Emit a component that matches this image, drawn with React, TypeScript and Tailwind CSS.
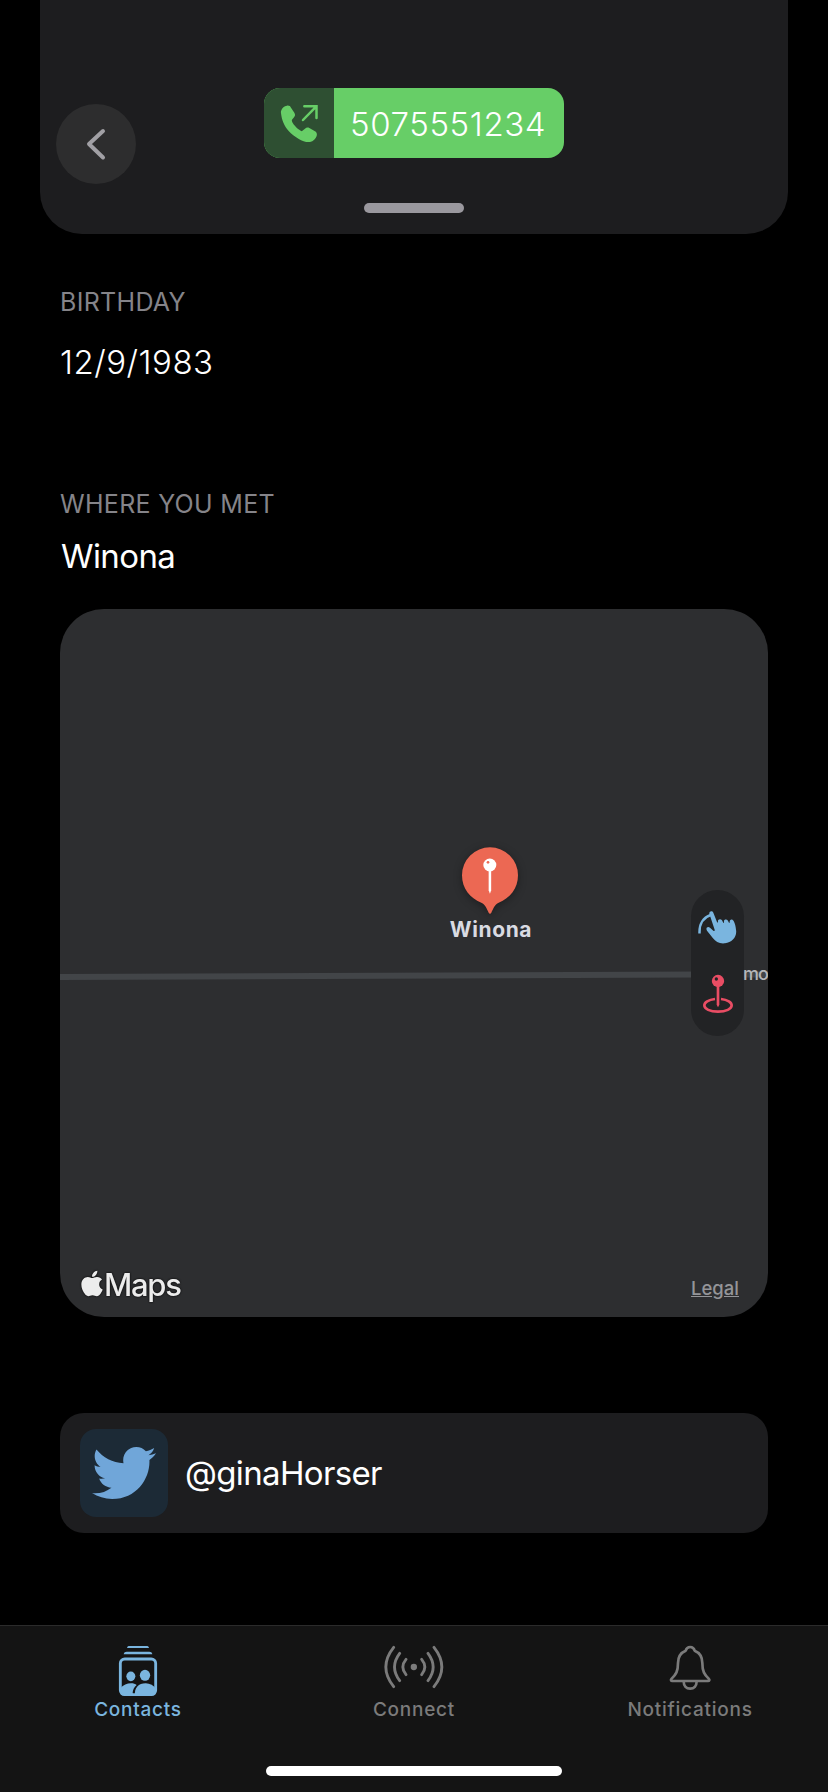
import React from "react";
import { FaApple, FaTwitter } from "react-icons/fa";

function OutgoingCallIcon() {
  return (
    <svg className="h-10 w-10" viewBox="88 102 120 120" fill="none">
      <path
        d="M94 130C92 119 102 108 112 107C118 106 122 109 124 113L134 128C138 134 136 138 132 143L128 148C126 151 126 153 128 157C132 165 143 177 153 182C156 184 158 184 160 181L166 176C170 172 175 172 179 174L196 184C201 187 203 192 201 198C198 207 191 214 181 216C163 219 135 202 117 183C103 168 96 149 94 130Z"
        fill="#67ce67"
      />
      <path d="M160 150L200 109M164 109H200.500V144" stroke="#67ce67" strokeWidth="7.500" strokeLinecap="round" strokeLinejoin="miter" />
    </svg>
  );
}

function PlacePin() {
  return (
    <svg className="h-[72px] w-[64px] drop-shadow-[0_2px_4px_rgba(0,0,0,0.35)]" viewBox="114 76 192 216">
      <path
        d="M210 83A84 84 0 0 1 294 167C294 206 270 236 236 249C224 254 219 268 214 279C212 283 208 283 206 279C201 268 196 254 184 249C150 236 126 206 126 167A84 84 0 0 1 210 83Z"
        fill="#ec6853"
      />
      <circle cx="209.500" cy="136" r="19.500" fill="#fff" />
      <path d="M206 154H213.500V212L209.750 222L206 212Z" fill="#fff" />
      <circle cx="204" cy="128" r="4" fill="#ec6853" />
    </svg>
  );
}

function HandDrawIcon() {
  return (
    <svg className="-ml-0.5 h-[34px] w-[40px]" viewBox="80 119 120 102" fill="none">
      <path d="M87.500 186C87 162 98 141 121 134" stroke="#7ab5df" strokeWidth="7.500" strokeLinecap="square" />
      <path
        d="M117 130C116 122 126 120 129 127L140 155C142 158 144 157 143 154C141 147 151 144 155 150L158 156C160 159 162 158 161 155C159 147 169 145 173 151L175 156C177 159 178 158 178 154C179 145 187 146 190 152C194 160 196 168 197 178C201 199 185 217 164 219C147 221 136 214 128 204L110 181C105 173 112 167 119 172L129 181C132 183 134 181 133 178Z"
        fill="#7ab5df"
      />
    </svg>
  );
}

function DropPinIcon() {
  return (
    <svg className="h-[40px] w-[32px]" viewBox="93 312 96 120" fill="none">
      <path
        d="M132 387C112 389 100 397 100 406C100 417 117 425 141 425C165 425 182 417 182 406C182 397 170 389 150 387"
        stroke="#e94d64"
        strokeWidth="8"
      />
      <path d="M137 348H145V404L141 412L137 404Z" fill="#e94d64" />
      <circle cx="141" cy="333" r="18.500" fill="#e94d64" />
      <circle cx="136" cy="327" r="5" fill="#222325" />
    </svg>
  );
}

function ContactsIcon() {
  return (
    <svg className="h-[52px] w-[40px]" viewBox="114 75 120 156" fill="none">
      <path d="M141 84C142 79 145 78 149 78H199C203 78 206 79 207 84Z" fill="#7ab5df" />
      <path d="M131 103C132 97 135 95 140 95H208C213 95 216 97 217 103Z" fill="#7ab5df" />
      <rect x="121" y="117" width="106" height="107" rx="13" stroke="#7ab5df" strokeWidth="8.500" />
      <ellipse cx="152.500" cy="169" rx="13.500" ry="14.500" fill="#7ab5df" />
      <ellipse cx="195" cy="166" rx="15.500" ry="16.500" fill="#7ab5df" />
      <path d="M121 205C130 195 141 190 153 190C160 190 166 192 170 195C162 202 158 211 158 219L160 226H134C125 226 121 222 121 212Z" fill="#7ab5df" />
      <path d="M165 226C162 204 176 190 197 190C210 190 221 197 228 206V214C228 222 224 226 216 226Z" fill="#7ab5df" />
    </svg>
  );
}

function BroadcastIcon() {
  return (
    <svg className="h-[52px] w-[64px]" viewBox="65 63 192 156" fill="none" stroke="#7b7b7b" strokeWidth="8.500" strokeLinecap="round">
      <circle cx="160.500" cy="141" r="9.500" fill="#7b7b7b" stroke="none" />
      <path d="M137 118Q118 141 137 164M118 100Q87 141 118 182M100 82Q53 141 100 200" />
      <path d="M184 118Q203 141 184 164M203 100Q234 141 203 182M221 82Q268 141 221 200" />
    </svg>
  );
}

function BellIcon() {
  return (
    <svg className="h-[48px] w-[44px]" viewBox="172 102 132 144" fill="none" stroke="#7b7b7b" strokeWidth="8" strokeLinejoin="round">
      <path d="M238.500 111C231 111 227 115 225 122C210 128 202 141 202 159C202 184 196 193 183 206C179 210 181 213 185 213H292C296 213 298 210 294 206C281 193 275 184 275 159C275 141 267 128 252 122C250 115 246 111 238.500 111Z" />
      <path d="M219 214C219 228 227 236 238.500 236C250 236 258 228 258 214" />
    </svg>
  );
}

export default function App() {
  return (
    <div className="flex h-[1792px] w-[828px] flex-col overflow-hidden bg-black font-['Inter','Liberation_Sans',sans-serif] text-white">
      <header className="mx-10 flex h-[234px] shrink-0 rounded-b-[42px] bg-[#1d1d1f] pl-4">
        <button className="mt-[104px] flex h-20 w-20 items-center justify-center rounded-full bg-[#2d2d2e]" aria-label="Back">
          <svg className="h-9 w-6" viewBox="0 0 24 36" fill="none" stroke="#a1a0a5" strokeWidth="4" strokeLinecap="round" strokeLinejoin="round">
            <path d="M19 5L5 18L19 31.500" />
          </svg>
        </button>
        <div className="ml-[128px] flex w-[300px] flex-col items-center pt-[88px]">
          <div className="flex h-[70px] w-full overflow-hidden rounded-2xl bg-[#67ce67]">
            <div className="flex w-[70px] items-center justify-center bg-[#2e4f32] pt-px">
              <OutgoingCallIcon />
            </div>
            <span className="pt-1 pl-4 text-[33px] leading-[64px] font-[360] tracking-[0.6px]">5075551234</span>
          </div>
          <div className="mt-[45px] h-[10px] w-[100px] rounded-full bg-[#9a989e]" />
        </div>
      </header>

      <main className="flex flex-1 flex-col px-[60px]">
        <h2 className="mt-[52px] h-8 text-[25px] leading-8 tracking-[0.3px] text-[#858489]">BIRTHDAY</h2>
        <p className="mt-6 h-10 text-[33px] leading-10 font-[350] tracking-[0.5px]">12/9/1983</p>
        <h2 className="mt-[106px] h-8 text-[25px] leading-8 tracking-[0.3px] text-[#858489]">WHERE YOU MET</h2>
        <p className="mt-4 h-10 pl-px text-[33px] leading-10 tracking-[-0.6px]">Winona</p>

        <section className="relative mt-[33px] h-[708px] w-[708px] shrink-0 overflow-hidden rounded-[44px] bg-[#2d2e30]">
          <svg className="absolute top-0 left-0 h-full w-full" viewBox="0 0 708 708">
            <path d="M0 368L640 365.500L708 365.500" stroke="#424548" strokeWidth="6" fill="none" />
          </svg>
          <div className="absolute top-[236px] left-[380px] flex w-[100px] flex-col items-center">
            <PlacePin />
            <span className="mt-[1px] ml-[2px] text-[21px] leading-6 font-bold tracking-[0.6px] text-[#d9dbe2]">Winona</span>
          </div>
          <div className="absolute top-[281px] left-[631px] flex h-[146px] w-[53px] flex-col items-center rounded-full bg-[#222325] pt-5">
            <HandDrawIcon />
            <div className="mt-[30px]">
              <DropPinIcon />
            </div>
          </div>
          <span className="absolute top-[353px] left-[683px] text-[18px] leading-6 font-medium tracking-[-1px] text-[#b5b6b9]">mo</span>
          <div className="absolute bottom-[12px] left-[21px] flex items-center text-[#ececec] drop-shadow-[0_0_1px_#000]">
            <FaApple className="mb-1 h-[29px] w-[22px]" />
            <span className="ml-px text-[31px] leading-10 font-[450] tracking-[-1.3px]">Maps</span>
          </div>
          <a className="absolute right-[29px] bottom-[17px] text-[18.5px] leading-6 font-medium text-[#949598] underline">Legal</a>
        </section>

        <section className="mt-24 flex h-[120px] shrink-0 items-center rounded-3xl bg-[#1d1d1f] px-5">
          <div className="flex h-[88px] w-[88px] items-center justify-center rounded-2xl bg-[#1c2a36]">
            <FaTwitter className="h-16 w-16 text-[#70a6d9]" />
          </div>
          <span className="ml-[17px] text-[33px] leading-10 tracking-[-0.65px]">@ginaHorser</span>
        </section>
      </main>

      <nav className="flex h-[167px] shrink-0 flex-col border-t border-[#2b2b2b] bg-[#141414]">
        <div className="grid h-[140px] grid-cols-3 text-[19px] leading-6 font-medium tracking-[0.75px] text-[#7b7b7b]">
          <div className="flex flex-col items-center pt-[19px] text-[#7ab5df]">
            <ContactsIcon />
            <span className="mt-px">Contacts</span>
          </div>
          <div className="flex flex-col items-center pt-[15px]">
            <BroadcastIcon />
            <span className="mt-[5px]">Connect</span>
          </div>
          <div className="flex flex-col items-center pt-[18px]">
            <BellIcon />
            <span className="mt-[6px]">Notifications</span>
          </div>
        </div>
        <div className="mx-auto h-[10px] w-[296px] rounded-full bg-white" />
      </nav>
    </div>
  );
}
